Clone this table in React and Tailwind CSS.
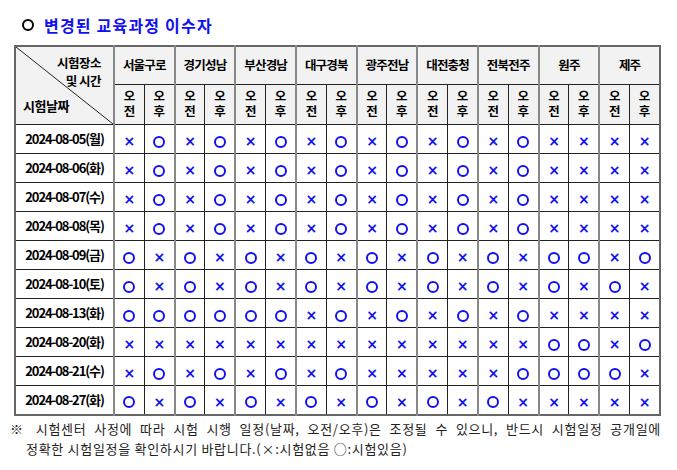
import React from "react";

const font = { fontFamily: '"Noto Sans CJK KR", "Liberation Sans", sans-serif' };

const groups = ["서울구로", "경기성남", "부산경남", "대구경북", "광주전남", "대전충청", "전북전주", "원주", "제주"];

const rows = [
  ["2024-08-05(월)", "XOXOXOXOXOXOXOXXXX"],
  ["2024-08-06(화)", "XOXOXOXOXOXOXOXXXX"],
  ["2024-08-07(수)", "XOXOXOXOXOXOXOXXXX"],
  ["2024-08-08(목)", "XOXOXOXOXOXOXOXXXX"],
  ["2024-08-09(금)", "OXOXOXOXOXOXOXOOXO"],
  ["2024-08-10(토)", "OXOXOXOXOXOXOXOXOX"],
  ["2024-08-13(화)", "OOOOOOXOXOXOXOXXXX"],
  ["2024-08-20(화)", "XXXXXXXXXXXXXXOOXO"],
  ["2024-08-21(수)", "XOXOXOXOXXXXXOOOOX"],
  ["2024-08-27(화)", "OXOXOXOXOXOXOXXXXX"],
];

function Mark({ v }) {
  if (v === "O") {
    return <span className="inline-block h-[12px] w-[12px] rounded-full border-2 border-[#1212f0] align-middle" />;
  }
  return (
    <span className="text-[14px] font-bold leading-none text-[#1212f0]" style={{ fontFamily: '"DejaVu Sans", sans-serif' }}>
      ×
    </span>
  );
}

// 오전 / 오후 written top to bottom
function Stack({ text }) {
  return (
    <div className="flex justify-center">
      <span className="text-[12.5px] font-bold leading-[15px] tracking-[2px] text-black [writing-mode:vertical-rl]">
        {text}
      </span>
    </div>
  );
}

export default function App() {
  return (
    <div className="min-h-[470px] w-[677px] bg-white px-[14px] pt-[14px]" style={font}>
      <div className="mb-[9px] flex h-[22px] items-center gap-[10px] pl-[8px]">
        <span className="inline-block h-[12px] w-[12px] rounded-full border-2 border-black" />
        <h1 className="text-[16px] font-bold tracking-[1.2px] text-[#1010f0]">변경된 교육과정 이수자</h1>
      </div>

      <table className="w-[647px] table-fixed border-collapse border-2 border-[#666]">
        <colgroup>
          <col className="w-[99px]" />
          {Array.from({ length: 18 }).map((_, i) => (
            <col key={i} />
          ))}
        </colgroup>
        <thead>
          <tr className="h-[38px] bg-[#f2f2f2]">
            <td rowSpan={2} className="relative border border-[#222] p-0">
              <svg className="absolute inset-0 h-full w-full" preserveAspectRatio="none" viewBox="0 0 100 100">
                <line x1="0" y1="0" x2="100" y2="100" stroke="#222" strokeWidth="1" vectorEffect="non-scaling-stroke" />
              </svg>
              <div className="flex h-[77px] flex-col font-bold tracking-[-0.5px] text-black">
                <p className="pr-[12px] pt-[7px] text-right text-[12.5px] leading-[18px]">
                  시험장소
                  <br />
                  및 시간
                </p>
                <span className="mt-auto pb-[10px] pl-[7px] text-[13px] leading-[16px]">시험날짜</span>
              </div>
            </td>
            {groups.map((g) => (
              <td
                key={g}
                colSpan={2}
                className="border border-l-2 border-[#222] border-l-[#888] text-center text-[12.5px] font-bold tracking-[-0.8px] text-black"
              >
                {g}
              </td>
            ))}
          </tr>
          <tr className="h-[39px] bg-[#f2f2f2]">
            {groups.map((g) => (
              <React.Fragment key={g}>
                <td className="border border-l-2 border-[#222] border-l-[#888] p-0">
                  <Stack text="오전" />
                </td>
                <td className="border border-[#222] p-0">
                  <Stack text="오후" />
                </td>
              </React.Fragment>
            ))}
          </tr>
        </thead>
        <tbody>
          {rows.map(([date, marks]) => (
            <tr key={date} className="h-[29px] bg-white">
              <td className="border border-[#222] text-center text-[13px] font-bold tracking-[-1.1px] text-black">
                {date}
              </td>
              {marks.split("").map((v, i) => (
                <td
                  key={i}
                  className={
                    i % 2 === 0
                      ? "border border-l-2 border-[#222] border-l-[#888] p-0 text-center"
                      : "border border-[#222] p-0 text-center"
                  }
                >
                  <Mark v={v} />
                </td>
              ))}
            </tr>
          ))}
        </tbody>
      </table>

      <div className="mt-[3px] text-[13px] leading-[20px] tracking-[0.7px] text-[#222]">
        <p className="-ml-[4px] pr-[2px] text-justify [text-align-last:justify]">
          ※ 시험센터 사정에 따라 시험 시행 일정(날짜, 오전/오후)은 조정될 수 있으니, 반드시 시험일정 공개일에
        </p>
        <p className="pl-[12px]">정확한 시험일정을 확인하시기 바랍니다.(×:시험없음 ○:시험있음)</p>
      </div>
    </div>
  );
}
